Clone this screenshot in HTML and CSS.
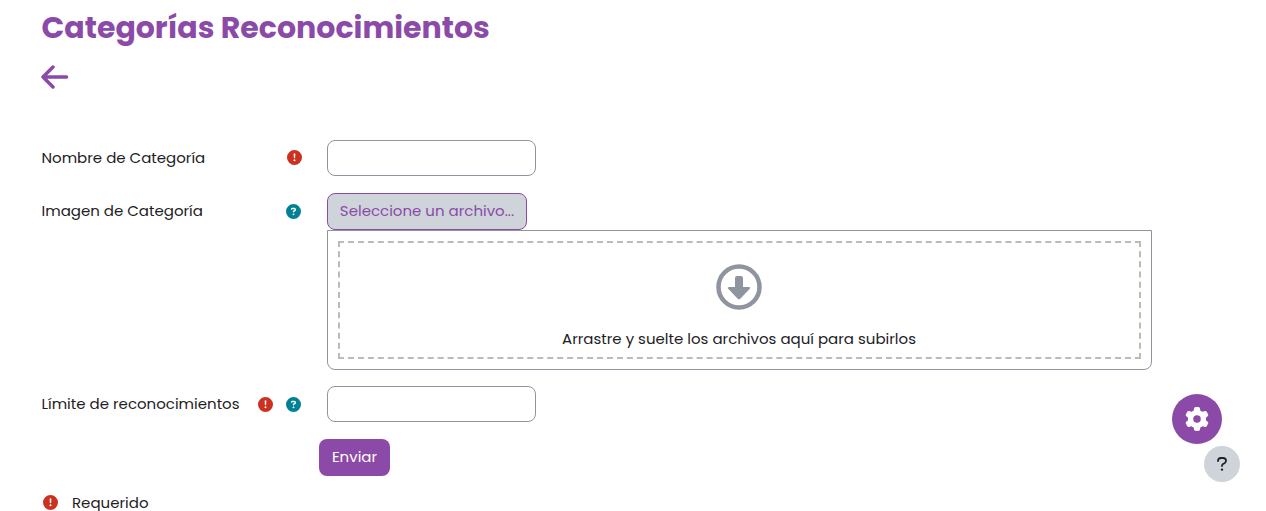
FILE: index.html
```html
<!DOCTYPE html>
<html lang="es">
<head>
    <meta charset="UTF-8">
    <meta name="viewport" content="width=device-width, initial-scale=1.0">
    <title>Categorías Reconocimientos</title>
    <link rel="stylesheet" href="styles.css">
</head>
<body>
    <!-- Iconos reutilizados en el formulario -->
    <svg class="sprite" aria-hidden="true">
        <symbol id="requerido" viewBox="0 0 512 512">
            <path d="M256 512A256 256 0 1 0 256 0a256 256 0 1 0 0 512zm0-400c17 0 30 12 29 28l-5 116c-.6 13.300-10.700 24-24 24s-23.400-10.700-24-24l-5-116c-1-16 12-28 29-28zM222 350a34 34 0 1 1 68 0 34 34 0 1 1-68 0z"/>
        </symbol>
        <symbol id="ayuda" viewBox="0 0 512 512">
            <path d="M256 512A256 256 0 1 0 256 0a256 256 0 1 0 0 512zM169.800 165.300c7.900-22.300 29.100-37.300 52.800-37.300h58.300c34.900 0 63.100 28.300 63.100 63.100c0 22.600-12.100 43.500-31.700 54.800L280 264.400c-.2 13-10.900 23.600-24 23.600c-13.300 0-24-10.700-24-24V250.500c0-8.600 4.600-16.500 12.100-20.800l44.300-25.400c4.700-2.700 7.600-7.700 7.600-13.100c0-8.400-6.800-15.100-15.100-15.100H222.600c-3.400 0-6.400 2.100-7.500 5.300l-.4 1.200c-4.400 12.500-18.200 19-30.600 14.600s-19-18.200-14.600-30.600l.4-1.200zM224 352a32 32 0 1 1 64 0 32 32 0 1 1-64 0z"/>
        </symbol>
    </svg>

    <h1>Categorías Reconocimientos</h1>
    <a href="#" class="volver" aria-label="Volver">
        <svg width="28" height="24" viewBox="0 0 28 24"><path d="M12 2 2 12l10 10M2 12h23.500"/></svg>
    </a>

    <form id="categoriaForm">
        <div class="fila">
            <div class="etiqueta">
                <label for="nombre">Nombre de Categoría</label>
                <span class="iconos solo"><svg class="icono rojo"><use href="#requerido"/></svg></span>
            </div>
            <input type="text" id="nombre" name="nombre">
        </div>

        <div class="fila">
            <div class="etiqueta">
                <label for="archivo">Imagen de Categoría</label>
                <span class="iconos"><svg class="icono azul"><use href="#ayuda"/></svg></span>
            </div>
            <div class="archivo">
                <button type="button" id="archivo" class="seleccionar">Seleccione un archivo...</button>
                <div class="zona">
                    <div class="zona-interior">
                        <svg class="flecha" width="46" height="46" viewBox="0 0 46 46">
                            <circle cx="23" cy="23" r="20.500"/>
                            <path d="M21 12h4q2 0 2 2v9h5.800q2.400 0 .8 2l-9.300 9.700q-1.300 1.300-2.600 0l-9.300-9.700q-1.600-2 .8-2H19v-9q0-2 2-2z"/>
                        </svg>
                        <p>Arrastre y suelte los archivos aquí para subirlos</p>
                    </div>
                </div>
            </div>
        </div>

        <div class="fila">
            <div class="etiqueta">
                <label for="limite">Límite de reconocimientos</label>
                <span class="iconos"><svg class="icono rojo"><use href="#requerido"/></svg><svg class="icono azul"><use href="#ayuda"/></svg></span>
            </div>
            <input type="text" id="limite" name="limite">
        </div>

        <button type="submit" class="enviar">Enviar</button>
    </form>

    <div class="nota">
        <svg class="icono rojo"><use href="#requerido"/></svg>
        <span>Requerido</span>
    </div>

    <div class="flotantes">
        <button type="button" class="ajustes" aria-label="Ajustes">
            <svg width="24" height="24" viewBox="0 0 512 512"><path d="M495.900 166.600c3.200 8.700 .5 18.400-6.400 24.600l-43.300 39.400c1.100 8.300 1.700 16.800 1.700 25.400s-.6 17.100-1.700 25.400l43.300 39.400c6.900 6.200 9.600 15.900 6.400 24.600c-4.400 11.900-9.700 23.300-15.800 34.300l-4.700 8.100c-6.600 11-14 21.400-22.100 31.200c-5.900 7.200-15.700 9.600-24.500 6.800l-55.700-17.700c-13.400 10.300-28.200 18.900-44 25.400l-12.500 57.100c-2 9.100-9 16.300-18.200 17.800c-13.800 2.300-28 3.500-42.500 3.500s-28.700-1.200-42.500-3.500c-9.200-1.500-16.200-8.700-18.200-17.800l-12.500-57.100c-15.800-6.500-30.600-15.100-44-25.400L83.100 425.900c-8.800 2.800-18.600 .3-24.500-6.800c-8.100-9.800-15.500-20.200-22.100-31.200l-4.700-8.100c-6.100-11-11.400-22.400-15.800-34.300c-3.200-8.700-.5-18.400 6.400-24.600l43.300-39.400C64.600 273.100 64 264.600 64 256s.6-17.100 1.700-25.400L22.400 191.200c-6.900-6.200-9.600-15.900-6.400-24.600c4.400-11.900 9.700-23.300 15.800-34.300l4.700-8.100c6.600-11 14-21.400 22.100-31.200c5.900-7.200 15.700-9.600 24.500-6.800l55.700 17.700c13.400-10.300 28.200-18.900 44-25.400l12.500-57.100c2-9.100 9-16.300 18.200-17.800C227.300 1.200 241.500 0 256 0s28.700 1.200 42.500 3.500c9.200 1.500 16.200 8.700 18.200 17.800l12.500 57.100c15.800 6.500 30.600 15.100 44 25.400l55.700-17.700c8.800-2.800 18.600-.3 24.500 6.800c8.100 9.800 15.500 20.200 22.100 31.200l4.700 8.100c6.100 11 11.400 22.400 15.800 34.300zM256 336a80 80 0 1 0 0-160 80 80 0 1 0 0 160z"/></svg>
        </button>
        <button type="button" class="pie-ayuda" aria-label="Ayuda">
            <svg width="12" height="16" viewBox="0 0 12 16"><path d="M2 5Q2 2 5 2h2Q10 2 10 4.800 10 6.300 8.500 7.200L7 8Q6 8.700 6 10"/><circle cx="6" cy="13.600" r="1.200"/></svg>
        </button>
    </div>
</body>
</html>
```

FILE: styles.css
```css
* {
    box-sizing: border-box;
}
body {
    font-family: Poppins, Inter, sans-serif;
    font-size: 15px;
    line-height: 22px;
    color: #1d2125;
    background-color: #fff;
    margin: 0;
    padding: 9px 41.5px 0;
    height: 511px;
    overflow: hidden;
}
.sprite {
    display: none;
}
svg {
    display: block;
}
h1 {
    color: #8c4aa8;
    font-size: 30px;
    line-height: 38px;
    font-weight: 700;
    margin: 0 0 18px;
}
.volver {
    display: block;
    width: 28px;
    margin-left: -0.5px;
}
.volver path {
    fill: none;
    stroke: #8c4aa8;
    stroke-width: 3.5;
    stroke-linecap: round;
    stroke-linejoin: round;
}
form {
    margin-top: 51px;
}
.fila {
    display: flex;
    align-items: flex-start;
    margin-bottom: 17px;
}
.fila:nth-child(2) {
    margin-bottom: 16px;
}
.etiqueta {
    display: flex;
    justify-content: space-between;
    align-items: center;
    width: 259.5px;
    height: 36px;
    margin-right: 26px;
}
.iconos {
    display: flex;
    gap: 13px;
}
.solo {
    margin: 0 -1px 1px 0;
}
.icono {
    width: 15px;
    height: 15px;
}
.rojo {
    fill: #ca3120;
}
.azul {
    fill: #008196;
}
input[type="text"] {
    width: 209px;
    height: 36px;
    padding: 6px 12px;
    border: 1px solid #8f959e;
    border-radius: 8px;
    background-color: #fff;
}
button {
    font: inherit;
    border: none;
    cursor: pointer;
}
.archivo {
    width: 825px;
}
.seleccionar {
    display: block;
    width: 200px;
    height: 37px;
    padding: 0 0 2px;
    color: #8c4aa8;
    background-color: #ced4da;
    border: 1px solid #8c4aa8;
    border-radius: 8px;
}
.zona {
    height: 140px;
    padding: 10px;
    border: 1px solid #8f959e;
    border-radius: 0 0 8px 8px;
}
.zona-interior {
    display: flex;
    flex-direction: column;
    align-items: center;
    height: 118px;
    padding-top: 21px;
    border: 2px dashed #bbb;
}
.zona-interior p {
    margin: 18px 1px 0 0;
}
.flecha {
    fill: #8f959e;
    margin-right: 1px;
}
.flecha circle {
    fill: none;
    stroke: #8f959e;
    stroke-width: 4.5;
}
.enviar {
    display: block;
    width: 71px;
    height: 37px;
    margin-left: 277.5px;
    padding: 0 0 2px;
    color: #fff;
    background-color: #8c4aa8;
    border-radius: 8px;
}
.nota {
    display: flex;
    align-items: center;
    gap: 14px;
    margin-top: 16px;
    padding-left: 1.5px;
}
.nota .icono {
    margin-bottom: 1px;
}
/* Botones flotantes sobre la página */
.flotantes {
    position: fixed;
    right: 26px;
    bottom: 29px;
    width: 68px;
}
.ajustes, .pie-ayuda {
    display: flex;
    align-items: center;
    justify-content: center;
    padding: 0;
    border-radius: 50%;
}
.ajustes {
    width: 50px;
    height: 50px;
    margin-bottom: 2px;
    background-color: #8c4aa8;
    fill: #fff;
}
.pie-ayuda {
    width: 36px;
    height: 36px;
    margin-left: auto;
    background-color: #ced4da;
    fill: #1d2125;
}
.pie-ayuda path {
    fill: none;
    stroke: #1d2125;
    stroke-width: 1.8;
    stroke-linecap: round;
}
```
